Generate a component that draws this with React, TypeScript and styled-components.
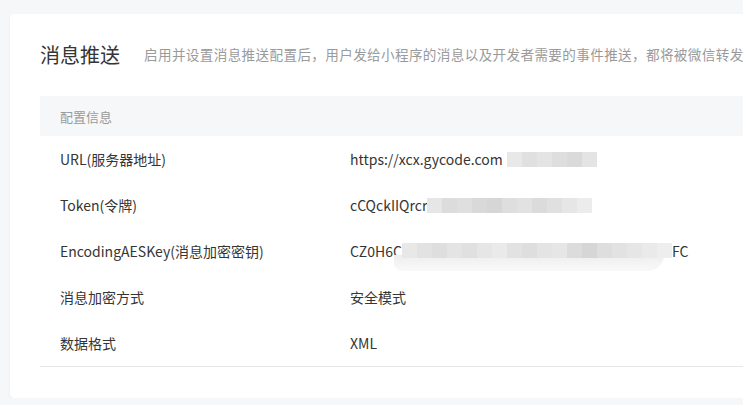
import React from "react";
import styled, { createGlobalStyle } from "styled-components";

const GlobalStyle = createGlobalStyle`
  html, body {
    margin: 0;
    padding: 0;
    background: #f6f7f9;
    overflow: hidden;
  }
  body {
    font-family: "Microsoft YaHei", "Noto Sans CJK SC", sans-serif;
    color: #353535;
  }
`;

const StyledPage = styled.div`
  padding: 14px 0 0 10px;
  width: 1000px;
`;

const StyledCard = styled.div`
  background: #fff;
  border-radius: 4px;
  box-shadow: 0 1px 2px rgba(0, 0, 0, 0.08);
  padding: 20px 30px 31px 30px;
  width: 900px;
`;

const StyledTitleRow = styled.div`
  display: flex;
  align-items: center;
  height: 40px;
  margin-bottom: 22px;
  white-space: nowrap;
`;

const StyledTitle = styled.h2`
  margin: 0 24px 0 0;
  font-size: 20px;
  font-weight: normal;
  color: #353535;
`;

const StyledDesc = styled.span`
  font-size: 13.6px;
  color: #9a9a9a;
  letter-spacing: 0.35px;
`;

const StyledTable = styled.div`
  border-bottom: 1px solid #e7e7eb;
`;

const StyledHeader = styled.div`
  display: flex;
  align-items: center;
  height: 40px;
  padding-left: 20px;
  background: #f6f7f9;
  font-size: 13px;
  color: #9a9a9a;
`;

const StyledRow = styled.div`
  display: grid;
  grid-template-columns: 290px 1fr;
  align-items: center;
  height: 46px;
  padding-left: 20px;
  font-size: 14px;
  color: #353535;
`;

const StyledValue = styled.div`
  display: flex;
  align-items: center;
  white-space: nowrap;
`;

const StyledMosaic = styled.div<{ $offset: number; $gap: number }>`
  position: relative;
  display: flex;
  height: 15px;
  margin-top: ${(p) => p.$offset}px;
  margin-left: ${(p) => p.$gap}px;
`;

const StyledCell = styled.span<{ $shade: string }>`
  position: relative;
  width: 15px;
  height: 100%;
  background: ${(p) => p.$shade};
`;

const StyledSmear = styled.div`
  position: absolute;
  left: -8px;
  right: 8px;
  top: 12px;
  height: 16px;
  border-radius: 0 0 40px 20px;
  background: linear-gradient(#eeeeee, #f9f9f9);
`;

const Mosaic = ({
  shades,
  offset = 0,
  gap = 0,
  smear = false,
}: {
  shades: string[];
  offset?: number;
  gap?: number;
  smear?: boolean;
}) => (
  <StyledMosaic $offset={offset} $gap={gap}>
    {smear && <StyledSmear />}
    {shades.map((s, i) => (
      <StyledCell key={i} $shade={s} />
    ))}
  </StyledMosaic>
);

const rows = [
  {
    label: "URL(服务器地址)",
    value: (
      <>
        https://xcx.gycode.com
        <Mosaic
          gap={4}
          shades={["#e8e8e8", "#e0e0e0", "#e4e4e4", "#dedede", "#dadada", "#e4e4e4"]}
        />
      </>
    ),
  },
  {
    label: "Token(令牌)",
    value: (
      <>
        cCQckIIQrcr
        <Mosaic
          shades={[
            "#e6e6e6",
            "#dcdcdc",
            "#dfdfdf",
            "#d9d9d9",
            "#d6d6d6",
            "#dedede",
            "#e2e2e2",
            "#dbdbdb",
            "#e0e0e0",
            "#e6e6e6",
            "#ececec",
          ]}
        />
      </>
    ),
  },
  {
    label: "EncodingAESKey(消息加密密钥)",
    value: (
      <>
        CZ0H6C
        <Mosaic
          smear
          offset={-2}
          shades={[
            "#e8e8e8",
            "#e2e2e2",
            "#dedede",
            "#e4e4e4",
            "#e0e0e0",
            "#e6e6e6",
            "#eaeaea",
            "#e2e2e2",
            "#dedede",
            "#e4e4e4",
            "#e6e6e6",
            "#dcdcdc",
            "#d6d6d6",
            "#dedede",
            "#e2e2e2",
            "#e6e6e6",
            "#eaeaea",
            "#eeeeee",
          ]}
        />
        FC
      </>
    ),
  },
  { label: "消息加密方式", value: "安全模式" },
  { label: "数据格式", value: "XML" },
];

const App = () => {
  return (
    <StyledPage>
      <GlobalStyle />
      <StyledCard>
        <StyledTitleRow>
          <StyledTitle>消息推送</StyledTitle>
          <StyledDesc>
            启用并设置消息推送配置后，用户发给小程序的消息以及开发者需要的事件推送，都将被微信转发
          </StyledDesc>
        </StyledTitleRow>
        <StyledTable>
          <StyledHeader>配置信息</StyledHeader>
          {rows.map((row) => (
            <StyledRow key={row.label}>
              <div>{row.label}</div>
              <StyledValue>{row.value}</StyledValue>
            </StyledRow>
          ))}
        </StyledTable>
      </StyledCard>
    </StyledPage>
  );
};

export default App;
